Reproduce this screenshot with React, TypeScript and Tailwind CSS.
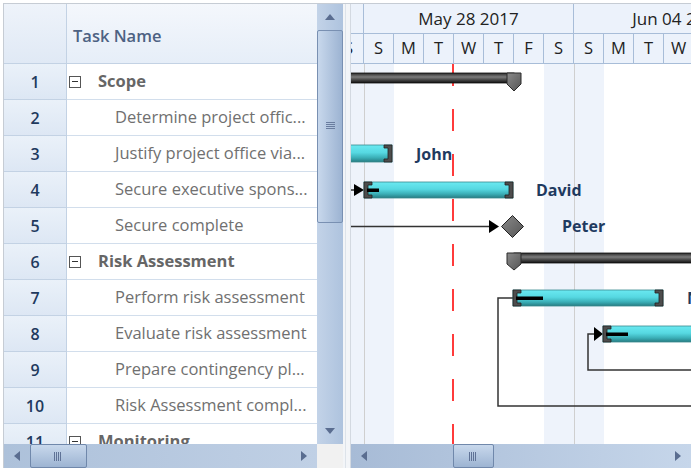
import React from "react";

const rows: { n: number; t: string; sum?: boolean }[] = [
  { n: 1, t: "Scope", sum: true },
  { n: 2, t: "Determine project offic..." },
  { n: 3, t: "Justify project office via..." },
  { n: 4, t: "Secure executive spons..." },
  { n: 5, t: "Secure complete" },
  { n: 6, t: "Risk Assessment", sum: true },
  { n: 7, t: "Perform risk assessment" },
  { n: 8, t: "Evaluate risk assessment" },
  { n: 9, t: "Prepare contingency pl..." },
  { n: 10, t: "Risk Assessment compl..." },
  { n: 11, t: "Monitoring", sum: true },
];

const days = ["S", "S", "M", "T", "W", "T", "F", "S", "S", "M", "T", "W", "T"];

function Tri({ dir }: { dir: "up" | "down" | "left" | "right" }) {
  const pts =
    dir === "up"
      ? "0,6 5,0 10,6"
      : dir === "down"
      ? "0,0 10,0 5,6"
      : dir === "left"
      ? "6,0 6,10 0,5"
      : "0,0 0,10 6,5";
  const w = dir === "up" || dir === "down" ? 10 : 6;
  const h = dir === "up" || dir === "down" ? 6 : 10;
  return (
    <svg width={w} height={h} viewBox={`0 0 ${w} ${h}`}>
      <polygon points={pts} fill="#5a6d90" />
    </svg>
  );
}

function VGrip() {
  return (
    <svg width="9" height="9" viewBox="0 0 9 9">
      {[0.5, 2.5, 4.5, 6.5].map((x) => (
        <line key={x} x1={x} y1="0" x2={x} y2="9" stroke="#5f7296" strokeWidth="1" />
      ))}
    </svg>
  );
}

function HGrip() {
  return (
    <svg width="9" height="9" viewBox="0 0 9 9">
      {[0.5, 2.5, 4.5, 6.5].map((y) => (
        <line key={y} x1="0" y1={y} x2="9" y2={y} stroke="#6a7d9f" strokeWidth="1" />
      ))}
    </svg>
  );
}

function Bar({
  x1,
  x2,
  y,
  h = 16,
  left = true,
  right = true,
  prog,
}: {
  x1: number;
  x2: number;
  y: number;
  h?: number;
  left?: boolean;
  right?: boolean;
  prog?: number;
}) {
  return (
    <g>
      <rect x={x1} y={y} width={x2 - x1} height={h} fill="url(#cy)" stroke="#3b8a90" strokeWidth="0.8" />
      {left && (
        <path
          d={`M${x1},${y} H${x1 + 8} V${y + 3} H${x1 + 4} V${y + h - 3} H${x1 + 8} V${y + h} H${x1} Z`}
          fill="#4d4d4d"
          stroke="#222"
          strokeWidth="0.8"
        />
      )}
      {right && (
        <path
          d={`M${x2},${y} H${x2 - 8} V${y + 3} H${x2 - 4} V${y + h - 3} H${x2 - 8} V${y + h} H${x2} Z`}
          fill="#4d4d4d"
          stroke="#222"
          strokeWidth="0.8"
        />
      )}
      {prog !== undefined && <rect x={x1 + 3} y={y + h / 2 - 1.5} width={prog} height={3.5} fill="#000" />}
    </g>
  );
}

function Chart() {
  return (
    <svg className="absolute left-0 top-0" width="341" height="380" viewBox="0 0 341 380">
      <defs>
        <linearGradient id="cy" x1="0" y1="0" x2="0" y2="1">
          <stop offset="0" stopColor="#6ae9f1" />
          <stop offset="0.45" stopColor="#56d8e1" />
          <stop offset="0.75" stopColor="#3aaeb6" />
          <stop offset="1" stopColor="#267c82" />
        </linearGradient>
        <linearGradient id="sm" x1="0" y1="0" x2="0" y2="1">
          <stop offset="0" stopColor="#2a2a2a" />
          <stop offset="0.4" stopColor="#7c7c7c" />
          <stop offset="0.6" stopColor="#555" />
          <stop offset="1" stopColor="#111" />
        </linearGradient>
        <linearGradient id="mk" x1="0" y1="0" x2="1" y2="1">
          <stop offset="0" stopColor="#8a8a8a" />
          <stop offset="1" stopColor="#555" />
        </linearGradient>
      </defs>
      <line x1="102" y1="0" x2="102" y2="380" stroke="#ff3b3b" strokeWidth="2" strokeDasharray="22 23" />

      {/* Row 1 summary */}
      <rect x="-5" y="9" width="168" height="10" fill="url(#sm)" stroke="#111" strokeWidth="0.8" />
      <polygon points="156,9 170,9 170,20 163,27 156,20" fill="url(#mk)" stroke="#2a2a2a" strokeWidth="1" />

      {/* Row 3 John */}
      <Bar x1={-6} x2={41} y={81} h={17} left={false} />

      {/* Row 4 David */}
      <line x1="0" y1="126" x2="4" y2="126" stroke="#333" strokeWidth="1.5" />
      <polygon points="3,120 13,126 3,132" fill="#000" />
      <Bar x1={13} x2={162} y={118} h={16} prog={12} />

      {/* Row 5 Peter */}
      <line x1="0" y1="162.5" x2="139" y2="162.5" stroke="#333" strokeWidth="1.5" />
      <polygon points="138,156 148,162.5 138,169" fill="#000" />
      <polygon points="161.5,151.5 172.5,162.5 161.5,173.5 150.5,162.5" fill="url(#mk)" stroke="#222" strokeWidth="1" />

      {/* Row 6 summary */}
      <rect x="163" y="189" width="185" height="10" fill="url(#sm)" stroke="#111" strokeWidth="0.8" />
      <polygon points="156,189 170,189 170,200 163,206 156,200" fill="url(#mk)" stroke="#2a2a2a" strokeWidth="1" />

      {/* connectors */}
      <path d="M162,234 H147 V342 H345" fill="none" stroke="#333" strokeWidth="1.5" />
      <path d="M244,270 H237 V306 H345" fill="none" stroke="#333" strokeWidth="1.5" />

      {/* Row 7 */}
      <Bar x1={162} x2={312} y={226} h={16} prog={27} />

      {/* Row 8 */}
      <polygon points="243,263 252,270 243,277" fill="#000" />
      <Bar x1={252} x2={420} y={262} h={16} prog={22} />
    </svg>
  );
}

export default function App() {
  return (
    <div className="h-[468px] w-[691px] overflow-hidden bg-white font-['Open_Sans',sans-serif]">
      <div className="ml-[3px] mt-[3px] flex h-[465px] border-l border-t border-[#c6ccd4]">
        {/* Left pane */}
        <div className="flex w-[339px] shrink-0 flex-col">
          <div className="flex h-[440px]">
            <div className="flex w-[313px] flex-col overflow-hidden">
              {/* header */}
              <div className="flex h-[60px] shrink-0 border-b border-[#c3d2e4] bg-[linear-gradient(to_bottom,#f4f7fc,#e6eef8)]">
                <div className="w-[63px] border-r border-[#c3d2e4] bg-[linear-gradient(to_bottom,#eef3fa,#e0e9f5)]" />
                <div className="flex w-[250px] items-center pl-[6px] pt-[5px] text-[16.5px] font-semibold text-[#4d6283]">
                  Task Name
                </div>
              </div>
              {rows.map((r) => (
                <div key={r.n} className="flex h-[36px] shrink-0">
                  <div className="flex w-[63px] items-center justify-center border-b border-r border-[#c3d2e4] bg-[linear-gradient(to_bottom,#eaf1f9,#dde7f4)] text-[16px] font-semibold text-[#1f3a5e]">
                    {r.n}
                  </div>
                  <div className="flex w-[250px] items-center overflow-hidden whitespace-nowrap border-b border-[#d2deec] text-[16.5px] text-[#707070]">
                    {r.sum ? (
                      <>
                        <div className="ml-[2px] mr-[17px] flex h-[12px] w-[12px] shrink-0 items-center justify-center border border-[#555]">
                          <div className="h-px w-[6px] bg-[#333]" />
                        </div>
                        <span className="font-bold text-[#666]">{r.t}</span>
                      </>
                    ) : (
                      <span className="pl-[48px]">{r.t}</span>
                    )}
                  </div>
                </div>
              ))}
            </div>
            {/* vertical scrollbar */}
            <div className="flex w-[26px] flex-col bg-[linear-gradient(to_right,#c3d3e8,#aec3de)]">
              <div className="flex h-[26px] items-center justify-center">
                <Tri dir="up" />
              </div>
              <div className="flex h-[193px] items-center justify-center rounded-[2px] border border-[#7990b2] bg-[linear-gradient(to_right,#c8d8ec,#9cb3d2)]">
                <HGrip />
              </div>
              <div className="flex-1" />
              <div className="flex h-[26px] items-center justify-center">
                <Tri dir="down" />
              </div>
            </div>
          </div>
          <div className="flex h-[24px]">
            <div className="flex w-[313px] items-center bg-[linear-gradient(to_right,#adc1da,#c0d0e5)]">
              <div className="flex h-full w-[26px] items-center justify-center">
                <Tri dir="left" />
              </div>
              <div className="flex h-full w-[57px] items-center justify-center rounded-[2px] border border-[#7088ab] bg-[linear-gradient(to_bottom,#c8d8ec,#9db4d2)]">
                <VGrip />
              </div>
              <div className="flex-1" />
              <div className="flex h-full w-[26px] items-center justify-center">
                <Tri dir="right" />
              </div>
            </div>
            <div className="w-[26px] bg-[#f1f1f1]" />
          </div>
        </div>

        {/* splitter */}
        <div className="flex w-[7px] shrink-0 flex-col bg-[#f3f5f8]">
          <div className="ml-[2px] h-full w-px bg-[#dde3ea]" />
        </div>

        {/* Gantt */}
        <div className="flex w-[341px] shrink-0 flex-col overflow-hidden border-l border-[#d3d9e1]">
          {/* header */}
          <div className="h-[60px] shrink-0 overflow-hidden bg-[#ecf2fb]">
            <div className="ml-[-197px] flex h-[30px] border-b border-[#a8bdd8] text-[17px] text-[#222]">
              <div className="flex w-[210px] shrink-0 items-center justify-center border-r border-[#a8bdd8]">May 21 2017</div>
              <div className="flex w-[210px] shrink-0 items-center justify-center border-r border-[#a8bdd8]">May 28 2017</div>
              <div className="flex w-[210px] shrink-0 items-center justify-center border-r border-[#a8bdd8]">Jun 04 2017</div>
            </div>
            <div className="ml-[-17px] flex h-[30px] border-b border-[#a8bdd8] text-[16.5px] text-[#222]">
              {days.map((d, i) => (
                <div key={i} className="flex w-[30px] shrink-0 items-center justify-center border-r border-[#a8bdd8]">
                  {d}
                </div>
              ))}
            </div>
          </div>
          {/* body */}
          <div className="relative h-[380px] shrink-0 overflow-hidden">
            <div className="ml-[-17px] flex h-full">
              {days.map((d, i) => {
                const weekend = i === 0 || i === 1 || i === 7 || i === 8;
                const weekStart = i === 1 || i === 8;
                return (
                  <div
                    key={i}
                    className={
                      "h-full w-[30px] shrink-0 " +
                      (weekend ? "bg-[#eef3fb] " : "bg-white ") +
                      (weekStart ? "border-l border-[#cfcfcf]" : "")
                    }
                  />
                );
              })}
            </div>
            <Chart />
            <div className="absolute left-[65px] top-[79px] whitespace-nowrap text-[16px] font-bold leading-[22px] text-[#1f3a60]">John</div>
            <div className="absolute left-[185px] top-[115px] whitespace-nowrap text-[16px] font-bold leading-[22px] text-[#1f3a60]">David</div>
            <div className="absolute left-[211px] top-[151px] whitespace-nowrap text-[16px] font-bold leading-[22px] text-[#1f3a60]">Peter</div>
            <div className="absolute left-[336px] top-[223px] whitespace-nowrap text-[16px] font-bold leading-[22px] text-[#1f3a60]">Nancy</div>
          </div>
          {/* h scrollbar */}
          <div className="flex h-[24px] shrink-0 bg-[linear-gradient(to_right,#a7bbd6,#c6d6ea)]">
            <div className="flex h-full w-[26px] items-center justify-center">
              <Tri dir="left" />
            </div>
            <div className="w-[76px]" />
            <div className="flex h-full w-[41px] items-center justify-center rounded-[2px] border border-[#7088ab] bg-[linear-gradient(to_bottom,#c8d8ec,#9db4d2)]">
              <VGrip />
            </div>
            <div className="flex-1" />
            <div className="flex h-full w-[26px] items-center justify-center">
              <Tri dir="right" />
            </div>
          </div>
        </div>
      </div>
    </div>
  );
}
